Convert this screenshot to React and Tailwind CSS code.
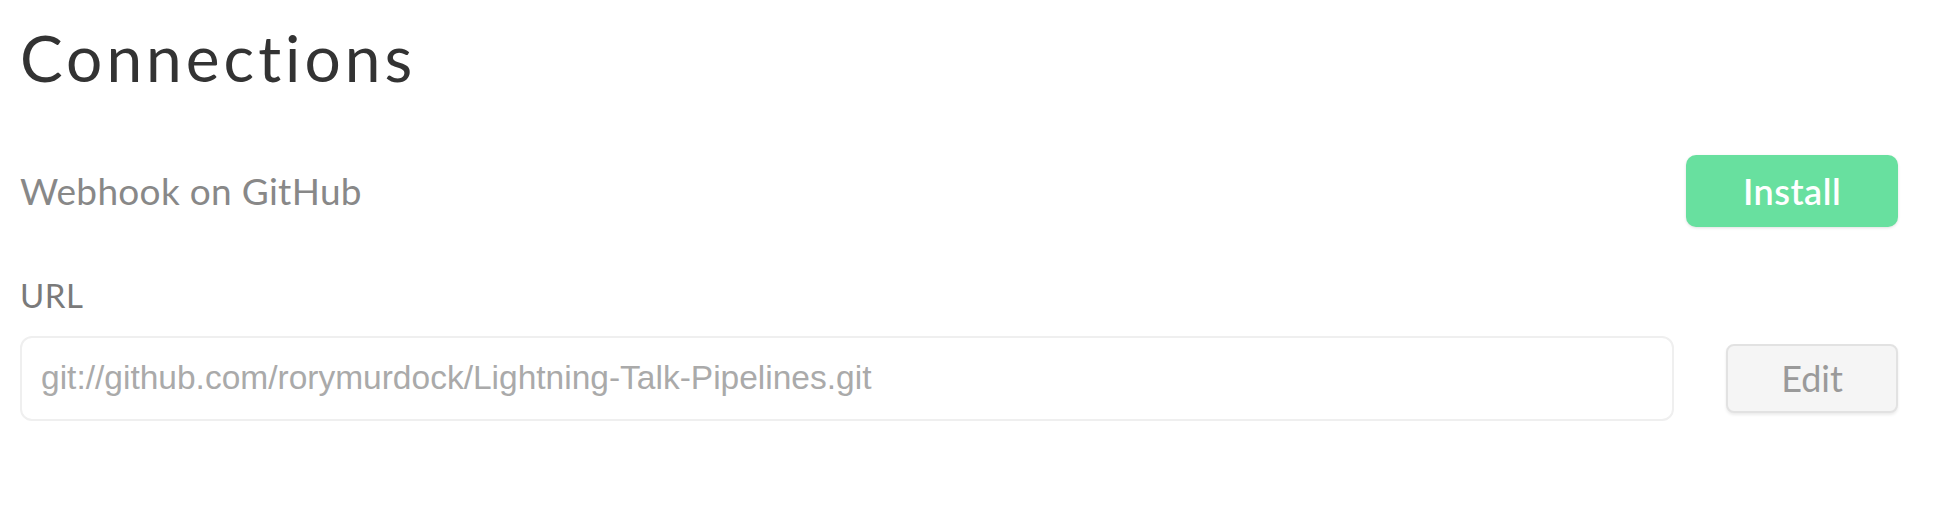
import React from 'react';

const sans = { fontFamily: 'Lato, "Open Sans", sans-serif' };

const Connections = () => {
  return (
    <div className="w-[1952px] h-[516px] bg-white pl-[20px] pr-[54px]" style={sans}>
      <h1 className="pt-[22px] text-[64px] leading-[72px] tracking-[4px] text-[#333333] font-normal">
        Connections
      </h1>

      <div className="mt-[61px] flex items-center justify-between">
        <span className="text-[37px] tracking-[0.3px] text-[#888888]">Webhook on GitHub</span>
        <button className="w-[212px] h-[72px] rounded-[10px] bg-[#68e09f] text-white text-[36px] font-semibold tracking-[0.5px] shadow-[0_1px_3px_rgba(0,0,0,0.12)]">
          Install
        </button>
      </div>

      <div className="mt-[44px] text-[33px] tracking-[0.5px] text-[#7a7a7a]">URL</div>

      <div className="mt-[15px] flex items-center gap-[52px]">
        <div className="flex-1 h-[85px] rounded-[12px] border-2 border-[#efefef] bg-white flex items-center px-[19px]">
          <span
            className="text-[33.5px] text-[#aaaaaa]"
            style={{ fontFamily: '"Liberation Sans", Arial, sans-serif' }}
          >
            git://github.com/rorymurdock/Lightning-Talk-Pipelines.git
          </span>
        </div>
        <button className="w-[172px] h-[69px] rounded-[8px] border-2 border-[#e2e2e2] bg-[#f5f5f5] text-[36px] text-[#9a9a9a] shadow-[0_2px_3px_rgba(0,0,0,0.08)]">
          Edit
        </button>
      </div>
    </div>
  );
};

export default function App() {
  return <Connections />;
}
